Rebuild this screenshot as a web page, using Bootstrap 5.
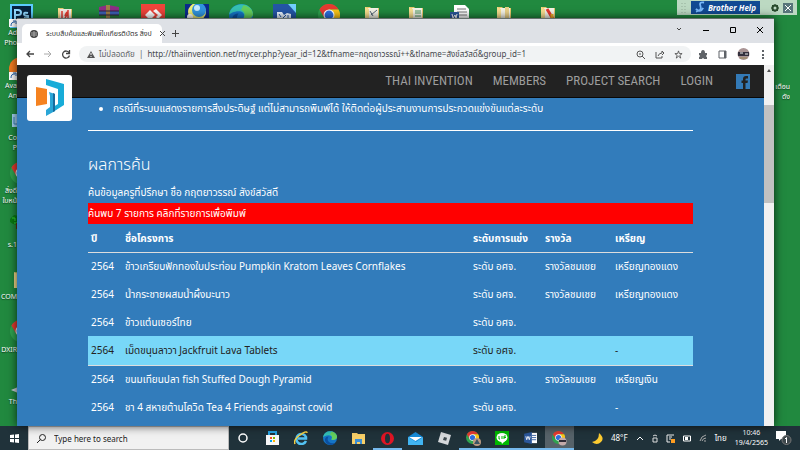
<!DOCTYPE html>
<html lang="th">
<head>
<meta charset="utf-8">
<meta name="viewport" content="width=device-width, initial-scale=1">
<title>ระบบสืบค้นและพิมพ์ใบเกียรติบัตร สิ่งประดิษฐ์</title>
<link href="https://cdn.jsdelivr.net/npm/bootstrap@5.3.0/dist/css/bootstrap.min.css" rel="stylesheet">
<style>
body{font-family:"Noto Sans","Noto Sans Thai","Open Sans",sans-serif;font-size:10px;line-height:14px;background:#21893f}
svg{display:block;flex:none}
.desk-item{position:absolute;width:17px;color:#fff;font-size:7px;line-height:10px;text-align:right;white-space:nowrap;overflow:hidden;text-shadow:0 1px 1px #0008}
.desk-icon{position:absolute}
.brother{position:absolute;right:3px;top:0;height:15px;width:120px;background:#bcd9c2}
.brother .tag{background:#114a93;color:#fff;font:italic bold 8px/13px "Noto Sans",sans-serif;width:69px}
.win{position:absolute;left:17px;right:26px;top:18px;bottom:0;border-top:1px solid #66706d;box-shadow:0 0 9px #000b;background:#fff}
.tabstrip{height:24px;background:#dee1e6}
.tab{width:140px;height:19px;background:#fff;border-radius:5px 5px 0 0;margin-left:5px;font-size:7px;color:#333}
.plain{border:0;background:none;padding:0;color:inherit;line-height:1}
.win-buttons{gap:21px;padding:8px 11px 0 0}
.tools{height:22px;color:#5f6368}
.tool-set{gap:10px;margin-left:8px}
.omni{height:16px;background:#f1f3f4;border-radius:8px;font-size:8px}
.omni input{font-size:8px;line-height:14px;color:#45484c}
.site-nav{height:33px;background:#222;border-bottom:1px solid #080808}
.site-nav a{color:#9d9d9d;font:13px/18px "Liberation Sans Narrow","Roboto Condensed",Roboto,sans-serif;text-decoration:none}
.site-nav .navi{margin-right:20px}
.site-nav .fb{margin:0 14px 0 3px}
.logo{position:absolute;left:10px;top:10px;width:45px;height:46px;background:#fff;border-radius:3px}
.page{background:#327cbb;color:#fff;padding:0 71px}
.page ul{padding-left:25px;margin:3px 0 0}
.page hr{margin:15px 0 24px;border-color:#fff;opacity:1}
.page h1{font-size:16px;line-height:18px;font-weight:300;margin:0 0 8px}
.query{line-height:22px}
.found{background:red;height:21px;line-height:21px}
.results{--bs-table-bg:transparent;table-layout:fixed;margin:0;color:#fff}
.results th,.results td{height:28px;padding:0 3px;vertical-align:middle;border:0;white-space:nowrap;color:inherit}
.results thead th{border-bottom:1px solid #ddd}
.results .hit{background:#78d7f8;color:#222}
.results .hit td{height:29px;border-bottom:1px solid #ddd}
.c-year{width:34px}.c-level{width:72px}.c-award{width:70px}.c-medal{width:81px}
.sbar{width:10px;background:#f1f1f1}
.thumb{height:98px;background:#c1c1c1}
.taskbar{height:24px;background:#20323a;color:#fff;font-size:8px;line-height:10px}
.taskbar time{font-size:7px}
.start{width:28px}
.search{width:201px;background:#f1f1f1;border:1px solid #bbb;color:#222}
.search input{font-size:8px}
.apps{width:345px}
.app.on{border-bottom:2px solid #76b9ed}
.app.now{background:#566269}
.app.on svg{margin-top:2px}
input:focus{outline:0}
</style>
<script src="https://cdn.jsdelivr.net/npm/bootstrap@5.3.0/dist/js/bootstrap.bundle.min.js"></script>
</head>
<body class="vh-100 d-flex flex-column overflow-hidden m-0">
<svg width="0" height="0" class="position-absolute" aria-hidden="true">
<symbol id="chrome" viewBox="0 0 20 20"><circle cx="10" cy="10" r="10" fill="#2fa34f"/><path d="M10 10 1.3 5A10 10 0 0 1 18.700 5H10z" fill="#e53a30"/><path d="M10 5h8.700A10 10 0 0 1 10 20l4.500-7.500z" fill="#fbc517"/><path d="M1.300 5 5.700 12.500 10 10V5z" fill="#e53a30"/><circle cx="10" cy="10" r="5" fill="#fff"/><circle cx="10" cy="10" r="4" fill="#2d6fdf"/></symbol>
<symbol id="edge" viewBox="0 0 20 20"><circle cx="10" cy="10" r="10" fill="#1575c6"/><path d="M0 9C2-3 19-2 20 8c0 5-6 6-8 4 2-3 0-6-4-6C4 6 1 8 0 9z" fill="#35c1b4"/><path d="M12 1c6 1 8 5 8 8-1 4-6 4-8 3 2-3 1-6-2-7z" fill="#65cf5c"/><path d="M8 8c-4 5 1 11 9 9-4 5-13 3-14-3-1-4 2-6 5-6z" fill="#0c50a0"/></symbol>
<symbol id="folder" viewBox="0 0 16 16"><path d="M1 2h5l1 1h8v13H1z" fill="#e9c96b"/><path d="M4 3h10v11H4z" fill="#f5f4e8"/><path d="M1 2l4 2v12H1z" fill="#f8df90"/></symbol>
<symbol id="word" viewBox="0 0 16 14"><path d="M8 1h7v12H8z" fill="#fff"/><path d="M9 4h5M9 6.500h5M9 9h5" stroke="#2b579a"/><path d="M0 2l9-2v14l-9-2z" fill="#2b579a"/><path d="M2 5l1 4 1.500-4L6 9l1-4" fill="none" stroke="#fff"/></symbol>
</svg>

<main class="flex-grow-1 position-relative" aria-label="Desktop">
  <svg class="desk-icon" style="left:10px;top:4px" width="23" height="24" viewBox="0 0 23 24"><rect x="1" y="1" width="21" height="22" fill="#06223f" stroke="#5ccbff" stroke-width="2"/><path d="M5 15V6h3q3 0 3 2.500T8 11H5M18 9q-4-1-4 1t4 2q1 3-4 2" fill="none" stroke="#8fd8ff" stroke-width="2"/></svg>
  <svg class="desk-icon" style="left:57px;top:6px" width="16" height="16"><use href="#folder"/><path d="M3 3h10v10H3z" fill="#f4ece4"/><path d="M5 12V5M8 12c5-7 2-8 0-2M11 4v8" stroke="#e53b2f" stroke-width="1.500" fill="none"/></svg>
  <svg class="desk-icon" style="left:98px;top:5px" width="22" height="16"><path d="M1 2l9-2 11 2v4H1z" fill="#8e2e86"/><path d="M1 6h20v4H1z" fill="#3d61b5"/><path d="M1 10h20v4H1z" fill="#287d3a"/><path d="M8 0h4v15H8z" fill="#a08148"/><path d="M1 6h20M1 10h20" stroke="#33203c"/></svg>
  <svg class="desk-icon" style="left:141px;top:4px" width="24" height="16"><path d="M0 0h24v16H0z" fill="#ef443b"/><path d="M4 11l5-5 5 5-5 5zM12 7l3-2 6 6-4 4-2-2 2-2z" fill="#fff"/></svg>
  <svg class="desk-icon" style="left:185px;top:4px" width="24" height="16"><path d="M0 0h24v16H0z" fill="#0b2a8c"/><circle cx="12" cy="8" r="9" fill="#f0ef76"/><circle cx="14" cy="6" r="7" fill="#3195df"/><circle cx="12" cy="4" r="3" fill="#c6ebff"/><circle cx="5" cy="13" r="3" fill="#fff"/></svg>
  <svg class="desk-icon" style="left:229px;top:4px" width="24" height="24"><use href="#edge"/></svg>
  <svg class="desk-icon" style="left:273px;top:4px" width="23" height="16"><path d="M0 0h15l8 8v8H0z" fill="#2456a6"/><path d="M15 0h8v9z" fill="#71cfff"/><path d="M4 8h5l2 3 3-2 4 1v5H4z" fill="#e9f5ff"/><path d="M6 10l2 3M10 14l3-3M15 11v3" stroke="#2456a6"/></svg>
  <svg class="desk-icon" style="left:318px;top:4px" width="22" height="22"><use href="#chrome"/></svg>
  <svg class="desk-icon" style="left:364px;top:5px" width="16" height="16"><use href="#folder"/><path d="M7 10l6-5M6 6l3 5" stroke="#567"/></svg>
  <svg class="desk-icon" style="left:408px;top:5px" width="16" height="16"><use href="#folder"/><path d="M7 6h6M7 8h6M7 11h6" stroke="#4a9860"/></svg>
  <svg class="desk-icon" style="left:450px;top:5px" width="20" height="17"><path d="M4 0h11l4 4v13H4z" fill="#fff"/><path d="M7 4h9M7 7h10M7 10h10" stroke="#777"/><path d="M0 7h9v8H0z" fill="#2b579a"/><path d="M2 9l1 4 2-3 1 3 1-4" fill="none" stroke="#fff"/></svg>
  <svg class="desk-icon" style="left:496px;top:5px" width="16" height="16"><use href="#folder"/><path d="M9 2h4v14H9z" fill="#ead188"/></svg>
  <svg class="desk-icon" style="left:540px;top:5px" width="16" height="16"><use href="#folder"/><path d="M7 4l6 10" stroke="#e5392f" stroke-width="3"/><path d="M12 9v6" stroke="#f0ad25" stroke-width="3"/></svg>

  <svg class="desk-icon" style="left:9px;top:19px" width="8" height="8"><path d="M0 0h8v8H0z" fill="#fff"/><path d="M2 7c0-3 1-4 4-4M4 2h3v3" fill="none" stroke="#2864ad"/></svg>
  <div class="desk-item" style="top:28px">Ad<br>Pho</div>
  <svg class="desk-icon" style="left:9px;top:57px" width="24" height="24"><circle cx="12" cy="12" r="12" fill="#f47b20"/><path d="M0 15h8v8H0z" fill="#fff"/><path d="M2 21c0-3 1-4 4-4m-2-1h3v3" fill="none" stroke="#2864ad"/></svg>
  <div class="desk-item" style="top:81px">Ava<br>An</div>
  <svg class="desk-icon" style="left:12px;top:114px" width="12" height="13"><path d="M0 0h12v13H0z" fill="#a5d4f4"/><path d="M2 3v7h8" stroke="#3d81b8" fill="none"/></svg>
  <div class="desk-item" style="top:133px">Co<br>P</div>
  <svg class="desk-icon" style="left:10px;top:162px" width="22" height="22"><use href="#chrome"/></svg>
  <div class="desk-item" style="top:186px">สิ่งดี<br>ใบหน้</div>
  <svg class="desk-icon" style="left:9px;top:214px" width="16" height="15"><path d="M1 5l4-4 5 1 4 6-5 3-5-1-3-2z" fill="#087b12"/><path d="M3 4h3v3M5 9h4M8 5h2" stroke="#32d834" fill="none"/><path d="M8 9v6" stroke="#58370e" stroke-width="2"/></svg>
  <div class="desk-item" style="top:240px">ร.1</div>
  <svg class="desk-icon" style="left:13px;top:270px" width="18" height="18"><use href="#folder"/></svg>
  <div class="desk-item" style="top:292px">COM</div>
  <svg class="desk-icon" style="left:10px;top:320px" width="22" height="22"><use href="#chrome"/></svg>
  <div class="desk-item" style="top:345px">DXIR</div>
  <svg class="desk-icon" style="left:11px;top:387px" width="7" height="6"><path d="M0 3l7-3v6z" fill="#c9d1da"/></svg>
  <div class="desk-item" style="top:397px">Th</div>
  <div class="desk-item" style="right:10px;top:82px;width:auto">เตือน<br>ดัง</div>

  <div class="brother d-flex align-items-center">
    <svg class="ms-1" width="6" height="10"><path d="M1 0v10M4 0v10" stroke="#93ad99" stroke-dasharray="1 2"/></svg>
    <span class="tag d-flex align-items-center justify-content-between ms-1 px-1"><svg width="10" height="13" viewBox="0 0 11 13"><path d="M10 1q-6-1-4 4t-5 6M1 8q5 5 8-1" fill="none" stroke="#78b9fa" stroke-width="2"/></svg><span class="text-nowrap">Brother Help</span></span>
    <button class="plain ms-auto me-1" aria-label="Settings"><svg width="8" height="8" viewBox="0 0 8 8"><circle cx="4" cy="4" r="2.500" fill="none" stroke="#284a2c" stroke-width="2"/><path d="M4 0v1M4 7v1M0 4h1M7 4h1M1 1l1 1M6 6l1 1M7 1 6 2M2 6 1 7" stroke="#284a2c"/></svg></button>
    <button class="plain me-1" aria-label="Close Brother Help"><svg width="10" height="10"><path d="M0 0h10v10H0z" fill="#58757a"/><path d="M2 2l6 6M8 2 2 8" stroke="#fff"/></svg></button>
  </div>

  <section class="win d-flex flex-column" aria-label="Browser window">
    <div class="tabstrip d-flex">
      <div class="tab d-flex align-items-center align-self-end px-2 gap-2">
        <svg width="8" height="8"><circle cx="4" cy="4" r="4" fill="#444"/><path d="M1 3h6M1 5h6M4 1v6" stroke="#aaa"/></svg>
        <span class="flex-grow-1 text-nowrap">ระบบสืบค้นและพิมพ์ใบเกียรติบัตร สิ่งป</span>
        <button class="plain" aria-label="Close tab"><svg width="5" height="5"><path d="M0 0l5 5M5 0 0 5" stroke="#444"/></svg></button>
      </div>
      <button class="plain ms-2 mt-1" aria-label="New tab"><svg width="11" height="7"><path d="M2 3.500h7M5.500 0v7" stroke="#444"/></svg></button>
      <div class="win-buttons ms-auto d-flex align-items-start">
        <button class="plain" aria-label="Search tabs"><svg width="6" height="6"><path d="M1 1l2 2 2-2" fill="none" stroke="#444"/></svg></button>
        <button class="plain" aria-label="Minimize"><svg width="6" height="6"><path d="M0 3.500h6" stroke="#000"/></svg></button>
        <button class="plain" aria-label="Maximize"><svg width="6" height="6"><path d="M.5.5h5v5h-5z" fill="none" stroke="#000"/></svg></button>
        <button class="plain" aria-label="Close"><svg width="6" height="6"><path d="M0 0l6 6M6 0 0 6" stroke="#000"/></svg></button>
      </div>
    </div>
    <div class="tools d-flex align-items-center ps-2 pe-2">
      <button class="plain" aria-label="Back"><svg width="10" height="8" viewBox="0 0 10 8"><path d="M9 4H2M5 1 2 4l3 3" fill="none" stroke="#444" stroke-width="1.300"/></svg></button>
      <button class="plain ms-2" aria-label="Forward"><svg width="10" height="8" viewBox="0 0 10 8"><path d="M1 4h7M5 1l3 3-3 3" fill="none" stroke="#aaa"/></svg></button>
      <button class="plain ms-2 me-2" aria-label="Reload"><svg width="10" height="9" viewBox="0 0 10 9"><path d="M8 2.500a3.500 3.500 0 1 0 .5 3M8.500 0v3.500H5" fill="none" stroke="#444" stroke-width="1.300"/></svg></button>
      <div class="omni d-flex align-items-center flex-grow-1 px-2">
        <svg width="8" height="7"><path d="M4 0l4 7H0z" fill="#555"/><path d="M4 2v2M4 5v1" stroke="#fff"/></svg>
        <label for="url" class="ms-1 text-nowrap">ไม่ปลอดภัย&nbsp; |</label>
        <input id="url" class="plain flex-grow-1 ms-1 w-25" value="http://thaiinvention.net/mycer.php?year_id=12&amp;tfname=กฤตยาวรรณ์++&amp;tlname=สังข์สวัสดิ์&amp;group_id=1">
        <div class="tool-set d-flex align-items-center">
          <button class="plain" aria-label="Zoom"><svg width="9" height="9"><circle cx="4" cy="4" r="3" fill="none" stroke="#555"/><path d="M6 6l3 3M3 4h2" stroke="#555"/></svg></button>
          <button class="plain" aria-label="Share"><svg width="9" height="9"><path d="M1 2v6h6V6M3 6q1-3 4-3V1l2 2-2 2" fill="none" stroke="#555"/></svg></button>
          <button class="plain" aria-label="Bookmark"><svg width="9" height="9" viewBox="0 0 10 10"><path d="M5 1l1 3h3L6.500 6l1 3L5 7 2.500 9l1-3L1 4h3z" fill="none" stroke="#555"/></svg></button>
        </div>
      </div>
      <div class="tool-set d-flex align-items-center">
        <button class="plain" aria-label="Extensions"><svg width="9" height="9"><path d="M0 3h2q0-3 2-3t2 3h2v2q-2 1 0 2v2H5q-1-2-2 0H0V7q2-1 0-2z" fill="#5f6368"/></svg></button>
        <button class="plain" aria-label="Side panel"><svg width="9" height="9"><path d="M1 1h7v7H1z" fill="none" stroke="#5f6368"/><path d="M6 1h2v7H6z" fill="#5f6368"/></svg></button>
        <button class="plain" aria-label="Profile"><svg width="13" height="12"><circle cx="6.500" cy="6" r="6" fill="#a99494"/><path d="M1 4h11v4H1z" fill="#33303d"/><path d="M3 5h3M8 6h3" stroke="#eee"/><path d="M3 10h7" stroke="#985"/></svg></button>
        <button class="plain" aria-label="Menu"><svg width="6" height="9"><path d="M2 0h2v2H2zM2 4h2v2H2zM2 7h2v2H2z" fill="#5f6368"/></svg></button>
      </div>
    </div>
    <div class="d-flex flex-grow-1 overflow-hidden position-relative">
      <div class="flex-grow-1 d-flex flex-column overflow-hidden">
        <nav class="site-nav d-flex align-items-center justify-content-end flex-shrink-0">
          <a class="logo" href="#" aria-label="Thai Invention home"><svg width="45" height="46" viewBox="0 0 45 46"><path d="M9 12l11 2v15L9 31z" fill="#f58220"/><path d="M19 4l18 5v21L26 37v-5l5-3V14l-12-4z" fill="#18acd8"/><path d="M22 17l6 2v17l-9 5v-6l4-3V21z" fill="#2aa6d7"/><path d="M28 19v17l-2 1V18z" fill="#176b9d"/></svg></a>
          <a class="navi" href="#">THAI INVENTION</a>
          <a class="navi" href="#">MEMBERS</a>
          <a class="navi" href="#">PROJECT SEARCH</a>
          <a class="navi" href="#">LOGIN</a>
          <a href="#" class="fb" aria-label="Facebook"><svg width="14" height="15"><path d="M0 0h14v15H0z" fill="#337ab7"/><path d="M7 15V9H5.500V6.500H7V5q0-3 3-3h2v2.500h-1.500q-1 0-1 1v1H12L11.500 9h-2v6z" fill="#222"/></svg></a>
        </nav>
        <div class="page flex-grow-1">
          <ul><li class="text-nowrap">กรณีที่ระบบแสดงรายการสิ่งประดิษฐ์ แต่ไม่สามารถพิมพ์ได้ ให้ติดต่อผู้ประสานงานการประกวดแข่งขันแต่ละระดับ</li></ul>
          <hr>
          <h1>ผลการค้น</h1>
          <p class="query mb-0">ค้นข้อมูลครูที่ปรึกษา ชื่อ กฤตยาวรรณ์ สังข์สวัสดิ์</p>
          <p class="found mb-0">ค้นพบ 7 รายการ คลิกที่รายการเพื่อพิมพ์</p>
          <table class="results table">
            <thead><tr><th class="c-year">ปี</th><th>ชื่อโครงการ</th><th class="c-level">ระดับการแข่ง</th><th class="c-award">รางวัล</th><th class="c-medal">เหรียญ</th></tr></thead>
            <tbody>
              <tr><td>2564</td><td>ข้าวเกรียบฟักทองใบประท่อม Pumpkin Kratom Leaves Cornflakes</td><td>ระดับ อศจ.</td><td>รางวัลชมเชย</td><td>เหรียญทองแดง</td></tr>
              <tr><td>2564</td><td>น้ำกระชายผสมน้ำผึ้งมะนาว</td><td>ระดับ อศจ.</td><td>รางวัลชมเชย</td><td>เหรียญทองแดง</td></tr>
              <tr><td>2564</td><td>ข้าวแต๋นเซอร์ไทย</td><td>ระดับ อศจ.</td><td></td><td></td></tr>
              <tr class="hit"><td>2564</td><td>เม็ดขนุนลาวา Jackfruit Lava Tablets</td><td>ระดับ อศจ.</td><td></td><td>-</td></tr>
              <tr><td>2564</td><td>ขนมเทียนปลา fish Stuffed Dough Pyramid</td><td>ระดับ อศจ.</td><td>รางวัลชมเชย</td><td>เหรียญเงิน</td></tr>
              <tr><td>2564</td><td>ชา 4 สหายต้านโควิด Tea 4 Friends against covid</td><td>ระดับ อศจ.</td><td></td><td>-</td></tr>
            </tbody>
          </table>
        </div>
      </div>
      <div class="sbar flex-shrink-0"><svg width="10" height="40"><path d="M3 7l2-3 2 3z" fill="#505050"/></svg><div class="thumb"></div></div>
    </div>
  </section>
</main>

<footer class="taskbar d-flex flex-shrink-0">
  <button class="plain start d-flex align-items-center justify-content-center" aria-label="Start"><svg width="9" height="9"><path d="M0 1l4-.5V4H0zM5 .4 9 0v4H5zM0 5h4v3.500L0 8zM5 5h4v4l-4-.4z" fill="#fff"/></svg></button>
  <label class="search d-flex align-items-center px-2"><svg width="9" height="9"><circle cx="5.500" cy="3.500" r="3" fill="none" stroke="#222"/><path d="M3.500 5.500 0 9" stroke="#222"/></svg><input class="plain ms-2 flex-grow-1 w-25" aria-label="Search" value="Type here to search"></label>
  <div class="apps d-flex">
    <button class="app plain flex-fill d-flex align-items-center justify-content-center w-25" aria-label="Cortana"><svg width="10" height="10"><circle cx="5" cy="5" r="4" fill="none" stroke="#fff" stroke-width="1.500"/></svg></button>
    <button class="app plain flex-fill d-flex align-items-center justify-content-center w-25" aria-label="Store"><svg width="13" height="14"><path d="M3 5V1h7v4" stroke="#28a7e8" stroke-width="2" fill="none"/><path d="M0 4h13v10H0z" fill="#f7f7f7"/><path d="M4 6h2v2H4z" fill="#f25022"/><path d="M7 6h2v2H7z" fill="#7fba00"/><path d="M4 9h2v2H4z" fill="#00a4ef"/><path d="M7 9h2v2H7z" fill="#ffb900"/></svg></button>
    <button class="app plain flex-fill d-flex align-items-center justify-content-center w-25" aria-label="Internet Explorer"><svg width="14" height="14"><path d="M12 10a5 5 0 1 1 0-4l0 1.500H4" fill="none" stroke="#53c2f2" stroke-width="2.500"/><path d="M1 13Q-1 9 6 4t7-2" fill="none" stroke="#f6cf41" stroke-width="1.500"/></svg></button>
    <button class="app plain flex-fill d-flex align-items-center justify-content-center w-25" aria-label="Edge"><svg width="14" height="14"><use href="#edge"/></svg></button>
    <button class="app plain flex-fill d-flex align-items-center justify-content-center w-25" aria-label="Files"><svg width="13" height="11"><path d="M0 0h5l1 1h7v10H0z" fill="#f7cf68"/><path d="M3 11V6h7v5H8V9H5v2z" fill="#3d8fd5"/></svg></button>
    <button class="app on plain flex-fill d-flex align-items-center justify-content-center w-25" aria-label="Opera"><svg width="13" height="13"><circle cx="6.500" cy="6.500" r="6.500" fill="#df1524"/><ellipse cx="6.500" cy="6.500" rx="2.500" ry="4.700" fill="#20323a"/></svg></button>
    <button class="app plain flex-fill d-flex align-items-center justify-content-center w-25" aria-label="Mail"><svg width="15" height="13"><path d="M0 5l7.500-5L15 5v8H0z" fill="#178bd8"/><path d="M1 5h13L7.500 9z" fill="#fff"/><path d="M0 13V5l8 5 7-5v8z" fill="#41b5f2"/></svg></button>
    <button class="app plain flex-fill d-flex align-items-center justify-content-center w-25" aria-label="Roblox"><svg width="13" height="13"><path d="M3 0l10 3-3 10L0 10z" fill="#d5d8db"/><path d="M6 5l3 .7-.8 3L5 8z" fill="#3c474d"/></svg></button>
    <button class="app on plain flex-fill d-flex align-items-center justify-content-center w-25" aria-label="Chrome"><svg width="15" height="15"><use href="#chrome" width="13" height="13"/><circle cx="11" cy="11" r="4" fill="#ba9a80"/><path d="M8 13l3-5 3 5" fill="#3a5464"/></svg></button>
    <button class="app on plain flex-fill d-flex align-items-center justify-content-center w-25" aria-label="LINE"><svg width="14" height="14"><path d="M0 0h14v14H0z" fill="#00b900"/><ellipse cx="7" cy="6.500" rx="5.500" ry="4.500" fill="#fff"/><path d="M6 10h4l-3 3z" fill="#fff"/><path d="M4 5v3h1M7 5v3M9 8V5h2M9 6.500h2" stroke="#00b900" fill="none"/></svg></button>
    <button class="app on plain flex-fill d-flex align-items-center justify-content-center w-25" aria-label="Word"><svg width="14" height="12"><use href="#word"/></svg></button>
    <button class="app on now plain flex-fill d-flex align-items-center justify-content-center w-25" aria-label="Chrome, current window"><svg width="15" height="15"><use href="#chrome" width="13" height="13"/><circle cx="10.500" cy="10.500" r="4" fill="#c4aaaa"/><path d="M7 9h7v2H7z" fill="#302c38"/></svg></button>
  </div>
  <div class="ms-auto d-flex align-items-center gap-2 pe-2">
    <svg width="11" height="11"><path d="M7 0q6 5 2 9T0 9q7-1 7-9z" fill="#fdcb30"/></svg>
    <span>48°F</span>
    <button class="plain" aria-label="Show hidden icons"><svg width="8" height="6"><path d="M1 5l3-3 3 3" fill="none" stroke="#fff"/></svg></button>
    <svg width="6" height="9"><path d="M1 2q2-2 4 0M1 4h4v4H1z" fill="none" stroke="#ddd"/></svg>
    <svg width="9" height="9"><path d="M8 1H1v7h3M3 3h3M3 5h2" fill="none" stroke="#eee"/><path d="M5 5h4v4H5z" fill="#ff9d20"/></svg>
    <svg width="8" height="7"><path d="M.5 1h7v5h-7z" fill="none" stroke="#fff"/><path d="M2 2h3v3H2z" fill="#fff"/></svg>
    <svg width="8" height="8"><path d="M1 7q1-5 6-6M3 7q1-3 4-3M5 7h2" fill="none" stroke="#aaa"/></svg>
    <span>ไทย</span>
    <time class="text-center">10:46<br>19/4/2565</time>
    <button class="plain" aria-label="Notifications"><svg width="16" height="16" viewBox="0 0 16 16"><path d="M0 1h10v8H5l-2 2V9H0z" fill="#fff"/><circle cx="10.500" cy="10" r="4.500" fill="#3d474b" stroke="#777"/><path d="M9 9l1.500-1.500V13" fill="none" stroke="#fff"/></svg></button>
  </div>
</footer>
</body>
</html>
